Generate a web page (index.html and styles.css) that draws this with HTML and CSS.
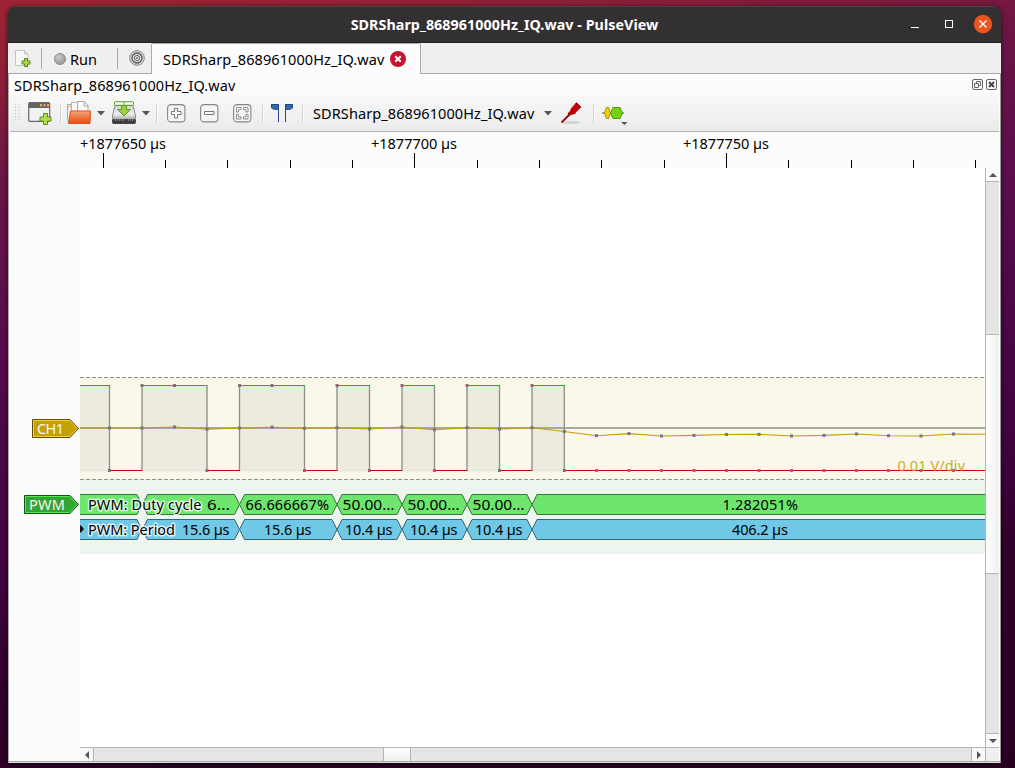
FILE: index.html
```html
<!DOCTYPE html>
<html lang="en">
<head>
<meta charset="UTF-8">
<meta name="viewport" content="width=device-width, initial-scale=1.0">
<title>SDRSharp_868961000Hz_IQ.wav - PulseView</title>
<link rel="stylesheet" href="styles.css">
</head>
<body>

<div class="window">
    <div class="titlebar">
        <span class="spacer"></span>
        <h1 class="title">SDRSharp_868961000Hz_IQ.wav - PulseView</h1>
        <div class="window-buttons">
            <svg width="92" height="36" viewBox="0 0 92 36">
                <path d="M2 20.500h8" stroke="#fff"/>
                <rect x="36.500" y="13.500" width="7" height="7" fill="none" stroke="#fff"/>
                <circle cx="74" cy="17" r="9.200" fill="#e95420"/>
                <path d="M70.500 13.500l7 7m0-7l-7 7" stroke="#fff" stroke-width="1.400"/>
            </svg>
        </div>
    </div>

    <div class="tabbar">
        <div class="tools">
            <svg class="new-session" width="16" height="17" viewBox="0 0 16 17">
                <path d="M.5.5h9l3.500 3.500v11.500H.5z" fill="#f7f7f5" stroke="#c2c2be"/>
                <path d="M9.500.5v3.500H13" fill="#ddd" stroke="#c2c2be"/>
                <path d="M9.500 8.500h3v2.500H15v3h-2.500v2.500h-3V14H7v-3h2.500z" fill="#a9d640" stroke="#57871a"/>
            </svg>
            <span class="line"></span>
            <span class="run"><i class="led"></i>Run</span>
            <span class="line"></span>
            <svg class="settings" width="16" height="16" viewBox="0 0 16 16" fill="none">
                <circle cx="8" cy="8" r="7.300" fill="#dcdcdc" stroke="#858585"/>
                <circle cx="8" cy="8" r="5" stroke="#555" stroke-width="1.300"/>
                <circle cx="8" cy="8" r="2.600" stroke="#666"/>
                <circle cx="8" cy="8" r=".8" fill="#333"/>
            </svg>
        </div>
        <div class="tab">
            <span class="label">SDRSharp_868961000Hz_IQ.wav</span>
            <svg width="16" height="16" viewBox="0 0 16 16">
                <circle cx="8" cy="8" r="8" fill="#c8142f"/>
                <path d="M5.200 5.200l5.600 5.600m0-5.600l-5.600 5.600" stroke="#fff" stroke-width="2"/>
            </svg>
        </div>
        <div class="tabbar-rest"></div>
    </div>

    <div class="dock">
        <div class="dock-title">
            <span class="label">SDRSharp_868961000Hz_IQ.wav</span>
            <svg width="25" height="11" viewBox="0 0 25 11" fill="none" stroke="#666">
                <rect x=".5" y=".5" width="10" height="10" rx="1.500"/>
                <path d="M4.500 4.500v-2h4v4h-2M2.500 4.500h4v4h-4z"/>
                <rect x="14.500" y=".5" width="10" height="10" rx="1.500"/>
                <path d="M17 3l5 5m0-5l-5 5" stroke="#444" stroke-width="1.900"/>
            </svg>
        </div>

        <div class="toolbar">
            <svg class="grip" width="5" height="18" viewBox="0 0 5 18">
                <path d="M.5 0v18M4 0v18" stroke="#c0c0c0" stroke-dasharray="1 2"/>
            </svg>
            <svg class="new-view" width="24" height="24" viewBox="0 0 24 24">
                <rect x=".7" y="1.700" width="21" height="18.600" rx="1" fill="#f2f2f2" stroke="#666" stroke-width="1.200"/>
                <path d="M1 2h20.500v5H1z" fill="#626262"/>
                <path d="M12 3h2v2.500h-2zM15.500 3h2v2.500h-2zM19 3h2v2.500h-2z" fill="#f0a94e"/>
                <path d="M15.500 12.500h4V16H23v4h-3.500v3.500h-4V20H12v-4h3.500z" fill="#b0dc4c" stroke="#5b8f1c"/>
            </svg>
            <span class="sep"></span>
            <svg class="open" width="25" height="24" viewBox="0 0 25 24">
                <defs>
                    <linearGradient id="folder" x1="0" y1="0" x2="0" y2="1">
                        <stop offset="0" stop-color="#f7a57d"/>
                        <stop offset=".45" stop-color="#ee7a42"/>
                        <stop offset="1" stop-color="#ef4a12"/>
                    </linearGradient>
                </defs>
                <path d="M.5 3.500h8v18H2l-1.500-2z" fill="#eee" stroke="#aaa"/>
                <path d="M4.500 1.500h7v15h-7z" fill="#f7f7f7" stroke="#b5b5b5"/>
                <path d="M10.500.5h7l3.500 4v12H10.500z" fill="#fafafa" stroke="#aaa"/>
                <path d="M17 .5V5h4" fill="none" stroke="#aaa"/>
                <path d="M3.500 10h20l-.5 12.500H1.500z" fill="url(#folder)" stroke="#d8501c"/>
                <path d="M1.500 5.500h3" stroke="#f0a060"/>
            </svg>
            <svg class="arrow" width="8" height="5" viewBox="0 0 8 5"><path d="M0 0h8L4 4.500z"/></svg>
            <svg class="save" width="24" height="24" viewBox="0 0 24 24">
                <defs>
                    <linearGradient id="disk" x1="0" y1="0" x2="0" y2="1">
                        <stop offset="0" stop-color="#d4d4d4"/>
                        <stop offset=".6" stop-color="#f0f0f0"/>
                        <stop offset="1" stop-color="#a8a8a8"/>
                    </linearGradient>
                </defs>
                <path d="M3 4.500h18l2.500 10.500v3.500H.5V15z" fill="url(#disk)" stroke="#8c8c8c"/>
                <rect x=".5" y="18.500" width="23" height="4" rx="1" fill="#3c3c3c" stroke="#444"/>
                <path d="M3 19h10M16 19h5" stroke="#bbb" stroke-dasharray="1 1"/>
                <rect x="2.500" y=".8" width="19" height="3.500" rx="1" fill="#fff" stroke="#4e9a1c"/>
                <path d="M9.500 4.500h5v4h4L12 15 5.500 8.500h4z" fill="#9bcf3c" stroke="#67982a"/>
                <path d="M12 1v3.500" stroke="#6aa84f"/>
            </svg>
            <svg class="arrow" width="8" height="5" viewBox="0 0 8 5"><path d="M0 0h8L4 4.500z"/></svg>
            <span class="sep"></span>
            <svg class="zoom" width="19" height="19" viewBox="0 0 19 19">
                <rect class="key" x=".6" y=".6" width="17.300" height="17.300" rx="3.500"/>
                <path d="M7.500 4.500h3v3H14v3h-3.500V14h-3v-3.500h-3v-3h3z" fill="#fff" stroke="#777"/>
            </svg>
            <svg class="zoom" width="19" height="19" viewBox="0 0 19 19">
                <rect class="key" x=".6" y=".6" width="17.300" height="17.300" rx="3.500"/>
                <path d="M4.500 7.500H14v3H4.500z" fill="#fff" stroke="#777"/>
            </svg>
            <svg class="zoom" width="19" height="19" viewBox="0 0 19 19">
                <rect class="key" x=".6" y=".6" width="17.300" height="17.300" rx="3.500"/>
                <path d="M3.500 3.500H8v2H5.500V8h-2zM15 3.500h-4.500v2H13V8h2zM3.500 15H8v-2H5.500v-2.500h-2zM15 15h-4.500v-2H13v-2.500h2z" fill="#fff" stroke="#858585" stroke-width=".9"/>
            </svg>
            <span class="sep"></span>
            <svg class="cursors" width="22" height="20" viewBox="0 0 22 20">
                <path d="M0 1h8v18H7V7H3L0 5z" fill="#3465a4"/>
                <path d="M22 1h-8v18h1V7h4l3-2z" fill="#3465a4"/>
                <path d="M.5 5V1.500h7V19M21.500 5V1.500h-7V19" fill="none" stroke="#204a87"/>
            </svg>
            <span class="sep"></span>
            <span class="label">SDRSharp_868961000Hz_IQ.wav</span>
            <svg class="arrow" width="8" height="5" viewBox="0 0 8 5"><path d="M0 0h8L4 4.500z"/></svg>
            <svg class="probe" width="22" height="24" viewBox="0 0 22 24">
                <ellipse cx="10" cy="21.500" rx="9" ry="1.600" fill="#d2d2d2"/>
                <path d="M.5 21.500L10 12" stroke="#a40000" stroke-width="1.800"/>
                <path d="M6.500 12.500l4-4 4.500 4-5 1.500-2 1z" fill="#b00000"/>
                <path d="M9.500 8.500L15.500 1.500l4.500 4.500-6.500 6.500z" fill="#cc0000" stroke="#a40000" stroke-width=".6"/>
                <path d="M14.500 2l5 5" stroke="#700" stroke-width=".8"/>
            </svg>
            <span class="sep"></span>
            <svg class="decoder" width="26" height="24" viewBox="0 0 26 24">
                <path d="M0 12h22" stroke="#555"/>
                <path d="M2.500 12l2-5.500h2l2 5.500-2 5.500h-2z" fill="#edd400" stroke="#a08d00"/>
                <path d="M8.500 12L11 6.500h7l2.500 5.500-2.500 5.500h-7z" fill="#73d216" stroke="#4e9a06"/>
                <path d="M19 21h6.500l-3.200 3z" fill="#555"/>
            </svg>
        </div>

        <svg class="ruler" width="990" height="36" viewBox="10 132 990 36">
            <text x="80" y="149" textLength="86">+1877650 µs</text>
            <text x="371" y="149" textLength="86">+1877700 µs</text>
            <text x="683" y="149" textLength="86">+1877750 µs</text>
            <path d="M103.500 153v15M414.500 153v15M726.500 153v15"/>
            <path d="M165.500 160v8M227.500 160v8M290.500 160v8M352.500 160v8M477.500 160v8M539.500 160v8M601.500 160v8M664.500 160v8M788.500 160v8M851.500 160v8M913.500 160v8M975.500 160v8"/>
        </svg>

        <div class="view">
            <svg class="headers" width="71" height="593" viewBox="9 168 71 593">
                <path d="M32.500 419.500H70l8.500 9-8.500 9H32.500z" fill="#c4a000" stroke="#625000"/>
                <path d="M33.500 436.500v-16H69.500l7.700 8-7.700 8z" fill="none" stroke="#f5d13a"/>
                <text x="37" y="434" textLength="27">CH1</text>
                <path d="M24.500 495.500H70l8.500 9-8.500 9H24.500z" fill="#32a532" stroke="#195219"/>
                <path d="M25.500 512.500v-16H69.500l7.700 8-7.700 8z" fill="none" stroke="#4fe84f"/>
                <text x="29" y="510" textLength="36">PWM</text>
            </svg>

            <div class="canvas">
                <svg class="traces" width="905" height="579" viewBox="80 168 905 579">
                    <rect x="80" y="377" width="905" height="103" fill="#faf7eb"/>
                    <rect x="80" y="480" width="905" height="74" fill="#edf6ee"/>
                    <path d="M80 377.500h905M80 479.500h905" stroke="#8e8e8a" stroke-dasharray="4 2"/>

                    <!-- logic levels -->
                    <path class="high-area" d="M80 386h29.500v85H80zM142 386h65v85h-65zM239.500 386h65v85h-65zM337 386h32.500v85H337zM402 386h32.500v85H402zM467 386h32.500v85H467zM532 386h32.500v85H532z"/>
                    <path d="M80 428h905" stroke="#a9a89e" stroke-width="2"/>
                    <path class="edges" d="M109.500 386v84M142 386v84M207 386v84M239.500 386v84M304.500 386v84M337 386v84M369.500 386v84M402 386v84M434.500 386v84M467 386v84M499.500 386v84M532 386v84M564.300 386v84"/>
                    <path d="M80 385.500h30M142 385.500h65.500M239.500 385.500h65.500M337 385.500h33M402 385.500h33M467 385.500h33M532 385.500h33" stroke="#1fb71f"/>
                    <path d="M109 470.500h33.500M207 470.500h33M304.500 470.500h33M369 470.500h33.500M434 470.500h33.500M499 470.500h33.500M564 470.500h421" stroke="#c80000"/>
                    <polyline class="analog" points="80,428 109.500,428 142,428 174.500,427 207,429.200 239.500,428 272,427.200 304.500,428.400 337,427.700 369.500,429 402,427 434.500,429.700 467,427.700 499.500,429 532,427.700 564.300,431.500 596.500,435.700 629,433.600 661.500,436 694,435.400 726.500,434.500 759,434.400 791.500,436 824,435.400 856.500,434 888.500,435.700 921,436 953.500,434 985,434.200"/>
                    <g id="samples"></g>
                    <text class="scale" x="897.500" y="471" textLength="67.500">0.01 V/div</text>

                    <!-- duty cycle row -->
                    <g class="duty">
                        <path d="M79 494.500h58l4.500 10-4.500 10H79z"/>
                        <path d="M142.500 504.500l5-10h87l5 10-5 10h-87z"/>
                        <path d="M239.500 504.500l5-10h87.500l5 10-5 10h-87.500z"/>
                        <path d="M337 504.500l5-10h55l5 10-5 10h-55z"/>
                        <path d="M402 504.500l5-10h55l5 10-5 10h-55z"/>
                        <path d="M467 504.500l5-10h55l5 10-5 10h-55z"/>
                        <path d="M532 504.500l5-10h450v20h-450z"/>
                    </g>
                    <!-- period row -->
                    <g class="period">
                        <path d="M79 519.500h58l4.500 10-4.500 10H79z"/>
                        <path d="M142.500 529.500l5-10h87l5 10-5 10h-87z"/>
                        <path d="M239.500 529.500l5-10h87.500l5 10-5 10h-87.500z"/>
                        <path d="M337 529.500l5-10h55l5 10-5 10h-55z"/>
                        <path d="M402 529.500l5-10h55l5 10-5 10h-55z"/>
                        <path d="M467 529.500l5-10h55l5 10-5 10h-55z"/>
                        <path d="M532 529.500l5-10h450v20h-450z"/>
                    </g>
                    <g class="values">
                        <text x="207" y="510" textLength="23" lengthAdjust="spacingAndGlyphs">6…</text>
                        <text x="245.500" y="510" textLength="83.500">66.666667%</text>
                        <text x="342.500" y="510" textLength="52" lengthAdjust="spacingAndGlyphs">50.00…</text>
                        <text x="407.500" y="510" textLength="52" lengthAdjust="spacingAndGlyphs">50.00…</text>
                        <text x="472.500" y="510" textLength="52" lengthAdjust="spacingAndGlyphs">50.00…</text>
                        <text x="722.500" y="510" textLength="75.500">1.282051%</text>
                        <text x="182" y="535" textLength="47.500">15.6 µs</text>
                        <text x="264" y="535" textLength="47.500">15.6 µs</text>
                        <text x="345" y="535" textLength="47.500">10.4 µs</text>
                        <text x="410" y="535" textLength="47.500">10.4 µs</text>
                        <text x="475" y="535" textLength="47.500">10.4 µs</text>
                        <text x="732" y="535" textLength="56">406.2 µs</text>
                    </g>
                    <path d="M80 525.500h1l3 3.500-3 3.500h-1z" fill="#111"/>
                    <g class="row-names">
                        <text x="88" y="510" textLength="113.500">PWM: Duty cycle</text>
                        <text x="88" y="535" textLength="87">PWM: Period</text>
                    </g>
                </svg>
                <div class="hscroll">
                    <span class="step"><svg width="4" height="8"><path d="M4 0v8L0 4z"/></svg></span>
                    <span class="track"><span class="thumb"></span></span>
                    <span class="step"><svg width="4" height="8"><path d="M0 0v8l4-4z"/></svg></span>
                </div>
            </div>

            <div class="vscroll">
                <span class="step"><svg width="8" height="4"><path d="M0 4h8L4 0z"/></svg></span>
                <span class="track"><span class="thumb"></span></span>
                <span class="step"><svg width="8" height="4"><path d="M0 0h8L4 4z"/></svg></span>
                <span class="corner"></span>
            </div>
        </div>
    </div>
</div>

<script>
    // sample markers on the analog trace and on the logic levels
    const points = document.querySelector('.analog').points;
    const high = [1, 1, 0, 1, 1, 0, 1, 0, 1, 0, 1, 0, 1];
    let dots = '';

    function dot(x, y) {
        dots += `<rect x="${x - 1.5}" y="${y - 1.5}" width="3" height="3"/>`;
    }

    for (let i = 1; i < points.length - 1; i++) {
        dot(points[i].x, points[i].y);
        dot(points[i].x, i > 1 && high[i - 2] ? 385.5 : 470.5);
    }
    document.getElementById('samples').innerHTML = dots;
</script>

</body>
</html>
```
FILE: styles.css
```css
* {
    box-sizing: border-box;
}

body {
    margin: 0;
    height: 768px;
    overflow: hidden;
    padding: 6px 14px 5px 8px;
    font-family: "Noto Sans", "Open Sans", sans-serif;
    font-size: 14.5px;
    color: #000;
    background: linear-gradient(172deg, #9e2432 0, #8c2037 80px, #6d1545 170px, #5c0f4c 300px, #4d0849 430px, #430442 560px, #300029 690px, #2a0022 100%);
}

svg {
    display: block;
    flex: none;
}

.window {
    width: 993px;
    height: 757px;
    display: flex;
    flex-direction: column;
    border-radius: 8px 8px 0 0;
    overflow: hidden;
    box-shadow: 0 1px 5px rgba(0, 0, 0, 0.6);
}

.titlebar {
    height: 37px;
    flex: none;
    display: flex;
    align-items: center;
    background: #333031;
    border-top: 1px solid #484546;
    border-bottom: 1px solid #221f20;
}

.titlebar .spacer,
.window-buttons {
    flex: 1;
}

.window-buttons svg {
    margin-left: auto;
}

.title {
    margin: 0;
    font-size: 14.3px;
    font-weight: 700;
    letter-spacing: 0.05px;
    color: #fff;
    white-space: nowrap;
}

.tabbar {
    height: 31px;
    flex: none;
    display: flex;
    background: #efefef;
}

.tools {
    width: 143px;
    display: flex;
    align-items: center;
    padding-left: 7px;
    border-bottom: 1px solid #ababab;
}

.tools .line {
    width: 1px;
    height: 21px;
    background: #aaa;
}

.new-session {
    margin-right: 10px;
}

.run {
    width: 75px;
    padding-left: 12px;
    display: flex;
    align-items: center;
    gap: 4px;
    padding-top: 1px;
}

.led {
    width: 12px;
    height: 12px;
    border-radius: 50%;
    border: 1px solid #888;
    background: radial-gradient(circle at 35% 30%, #ccc, #8d8f8a);
}

.settings {
    margin-left: 11px;
}

.tab {
    width: 270px;
    display: flex;
    align-items: center;
    gap: 5px;
    padding-left: 11px;
    background: #fcfcfc;
    border: 1px solid #ababab;
    border-bottom: 0;
    border-radius: 2px 2px 0 0;
}

.tabbar-rest {
    flex: 1;
    border-bottom: 1px solid #ababab;
}

.label {
    width: 222px;
    letter-spacing: 0.09px;
    white-space: nowrap;
}

.dock {
    flex: 1;
    display: flex;
    flex-direction: column;
    background: #fcfcfc;
    border-left: 1px solid #aaa;
    border-right: 1px solid #999;
}

.dock-title {
    height: 21px;
    flex: none;
    display: flex;
    align-items: center;
    justify-content: space-between;
    padding: 0 3px 0 5px;
}

.toolbar {
    height: 37px;
    flex: none;
    display: flex;
    align-items: center;
    margin: 0 1px;
    padding-left: 5px;
    background: linear-gradient(#f8f8f8, #ebebeb);
    border-bottom: 1px solid #b2b2b2;
}

.sep {
    width: 1px;
    height: 19px;
    background: #d4d4d4;
    box-shadow: 1px 0 #fafafa;
}

.arrow {
    fill: #555;
}

.new-view {
    margin: 0 8px;
}

.open {
    margin: 0 5px 0 6px;
}

.save {
    margin: 0 6px 0 7px;
}

.arrow + .sep {
    margin-left: 6px;
}

.zoom {
    margin-left: 14px;
}

.sep + .zoom {
    margin-left: 10px;
}

.zoom + .sep {
    margin-left: 10px;
}

.key {
    fill: #f5f5f4;
    stroke: #858585;
    stroke-width: 1.1;
}

.cursors {
    margin: 0 9px 0 8px;
}

.toolbar .label {
    margin: 0 9px 0 10px;
}

.probe {
    margin: 0 10px 0 9px;
}

.decoder {
    margin-left: 8px;
}

.ruler {
    margin-left: 1px;
    stroke: #000;
}

.ruler text {
    stroke: none;
    fill: #000;
}

.view {
    flex: 1;
    display: flex;
    min-height: 0;
    border-bottom: 1px solid #ddd;
    box-shadow: inset 0 -1px #aaa;
}

.headers text {
    fill: #f4f4f4;
}

.canvas {
    width: 905px;
    height: 593px;
    background: #fff;
}

.high-area {
    fill: #edebe0;
    stroke: #dddbd0;
    stroke-width: 0.5;
}

.edges {
    stroke: #8d8d89;
    stroke-width: 1.3;
}

.analog {
    fill: none;
    stroke: #c4a000;
    stroke-width: 1.1;
}

#samples {
    fill: #777;
}

.scale {
    fill: #c4a000;
    opacity: 0.85;
}

.duty {
    fill: #6ee66e;
    stroke: #387538;
}

.period {
    fill: #6ec8e6;
    stroke: #386675;
}

.values {
    fill: #000;
}

.row-names {
    fill: #000;
    stroke: #fff;
    stroke-opacity: 0.75;
    stroke-width: 3px;
    stroke-linejoin: round;
    paint-order: stroke;
}

.hscroll {
    height: 14px;
    display: flex;
    border-top: 1px solid #b5b5b5;
}

.step {
    width: 13px;
    height: 13px;
    flex: none;
    display: flex;
    align-items: center;
    justify-content: center;
    background: #f9f9f9;
    fill: #555;
}

.track {
    flex: 1;
    background: #e5e5e5;
}

.hscroll .track {
    padding-left: 289px;
    border: solid #b5b5b5;
    border-width: 0 1px;
}

.hscroll .thumb {
    display: block;
    width: 28px;
    height: 13px;
    background: linear-gradient(#fff, #f0f0f0);
    border: solid #b5b5b5;
    border-width: 0 1px;
}

.vscroll {
    width: 14px;
    height: 593px;
    display: flex;
    flex-direction: column;
    border-left: 1px solid #b5b5b5;
}

.vscroll .track {
    padding-top: 152px;
    border: solid #b5b5b5;
    border-width: 1px 0;
}

.vscroll .thumb {
    display: block;
    height: 240px;
    background: linear-gradient(90deg, #fff, #f0f0f0);
    border: solid #b5b5b5;
    border-width: 1px 0;
}

.corner {
    height: 14px;
    flex: none;
    background: #efefef;
    border-top: 1px solid #b5b5b5;
}
```
